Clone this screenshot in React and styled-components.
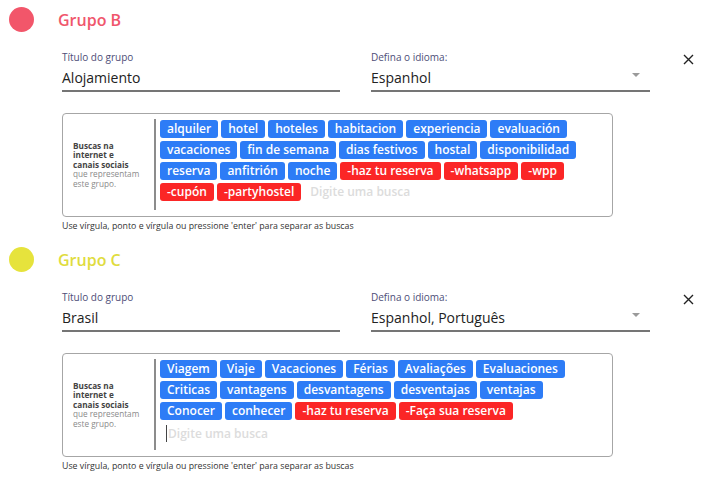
import React from 'react'
import styled, { createGlobalStyle } from 'styled-components'

const GlobalStyle = createGlobalStyle`
  body {
    margin: 0;
    background: #fff;
    font-family: 'Open Sans', 'Noto Sans', sans-serif;
  }
`

const groups = [
  {
    name: 'Grupo B',
    color: '#f2566a',
    text: '#f0566c',
    title: 'Alojamiento',
    lang: 'Espanhol',
    cursor: false,
    tags: [
      ['alquiler'], ['hotel'], ['hoteles'], ['habitacion'], ['experiencia'], ['evaluación'],
      ['vacaciones'], ['fin de semana'], ['dias festivos'], ['hostal'], ['disponibilidad'],
      ['reserva'], ['anfitrión'], ['noche'], ['-haz tu reserva', 1], ['-whatsapp', 1], ['-wpp', 1],
      ['-cupón', 1], ['-partyhostel', 1]
    ]
  },
  {
    name: 'Grupo C',
    color: '#e6e33c',
    text: '#e0dc3e',
    title: 'Brasil',
    lang: 'Espanhol, Português',
    cursor: true,
    tags: [
      ['Viagem'], ['Viaje'], ['Vacaciones'], ['Férias'], ['Avaliações'], ['Evaluaciones'],
      ['Criticas'], ['vantagens'], ['desvantagens'], ['desventajas'], ['ventajas'],
      ['Conocer'], ['conhecer'], ['-haz tu reserva', 1], ['-Faça sua reserva', 1]
    ]
  }
]

const Section = styled.section`
  padding: 7px 0 0 9px;
  height: 233px;
`

const Header = styled.div`
  display: flex;
  align-items: center;
  gap: 24px;
  height: 25px;
`

const Dot = styled.span`
  width: 25px;
  height: 25px;
  border-radius: 50%;
  background: ${(p) => p.color};
`

const GroupName = styled.h2`
  margin: 0;
  font-size: 16px;
  font-weight: 600;
  color: ${(p) => p.color};
`

const Body = styled.div`
  margin-left: 53px;
`

const FieldRow = styled.div`
  display: flex;
  align-items: flex-start;
  margin-top: 19px;
`

const Field = styled.div`
  width: ${(p) => p.width}px;
  margin-right: ${(p) => p.gap || 0}px;
  border-bottom: 2px solid #757575;
  position: relative;
`

const Label = styled.div`
  font-size: 10px;
  line-height: 13px;
  color: #4e4e78;
`

const Value = styled.div`
  font-size: 14px;
  line-height: 22px;
  padding: 3px 0 1px;
  color: #222;
`

const Arrow = styled.span`
  position: absolute;
  right: 10px;
  bottom: 13px;
  border-left: 4px solid transparent;
  border-right: 4px solid transparent;
  border-top: 4px solid #9a9a9a;
`

const Close = styled.button`
  border: 0;
  background: none;
  padding: 0;
  margin: 3px 0 0 33px;
  width: 12px;
  height: 12px;
  display: flex;
  cursor: pointer;
`

const Box = styled.div`
  margin-top: 21px;
  width: 551px;
  height: 104px;
  box-sizing: border-box;
  border: 1px solid #a6a6a6;
  border-radius: 4px;
  padding: 5px 10px 6px 10px;
  display: flex;
`

const Side = styled.div`
  width: 81px;
  flex: none;
  display: flex;
  flex-direction: column;
  justify-content: center;
  padding-right: 14px;
  box-sizing: border-box;
  font-size: 8.2px;
  line-height: 9.4px;
  color: #8a8a8a;
  b {
    color: #444;
    font-weight: 700;
  }
`

const Tags = styled.div`
  flex: 1;
  border-left: 2px solid #8c8c8c;
  padding: 1px 0 0 4px;
  display: flex;
  flex-wrap: wrap;
  align-content: flex-start;
  gap: 3px 3px;
`

const Tag = styled.span`
  height: 18px;
  line-height: 18px;
  padding: 0 7px;
  border-radius: 3px;
  font-size: 12px;
  font-weight: 600;
  color: #fff;
  background: ${(p) => (p.neg ? '#fb2626' : '#2d7cf6')};
`

const Input = styled.span`
  height: 18px;
  line-height: 18px;
  padding: ${(p) => (p.cursor ? '2px 0 0 6px' : '0 0 0 6px')};
  font-size: 12px;
  font-weight: 600;
  color: #dcdcdc;
  width: ${(p) => (p.cursor ? '100%' : 'auto')};
  span {
    border-left: 1px solid #444;
    padding-left: 1px;
  }
`

const Hint = styled.div`
  margin-top: 3px;
  font-size: 8.8px;
  line-height: 12px;
  color: #333;
`

const Group = ({ g }) => (
  <Section>
    <Header>
      <Dot color={g.color} />
      <GroupName color={g.text}>{g.name}</GroupName>
    </Header>
    <Body>
      <FieldRow>
        <Field width={278} gap={31}>
          <Label>Título do grupo</Label>
          <Value>{g.title}</Value>
        </Field>
        <Field width={279}>
          <Label>Defina o idioma:</Label>
          <Value>{g.lang}</Value>
          <Arrow />
        </Field>
        <Close>
          <svg width="11" height="11" viewBox="0 0 11 11">
            <path d="M1 1L10 10M10 1L1 10" stroke="#222" strokeWidth="1.4" />
          </svg>
        </Close>
      </FieldRow>
      <Box>
        <Side>
          <b>Buscas na internet e canais sociais</b>
          <span>que representam este grupo.</span>
        </Side>
        <Tags>
          {g.tags.map(([t, neg]) => (
            <Tag key={t} neg={neg}>{t}</Tag>
          ))}
          <Input cursor={g.cursor}>
            {g.cursor ? <span>Digite uma busca</span> : 'Digite uma busca'}
          </Input>
        </Tags>
      </Box>
      <Hint>Use vírgula, ponto e vírgula ou pressione 'enter' para separar as buscas</Hint>
    </Body>
  </Section>
)

export default function App() {
  return (
    <>
      <GlobalStyle />
      {groups.map((g) => (
        <Group key={g.name} g={g} />
      ))}
    </>
  )
}
